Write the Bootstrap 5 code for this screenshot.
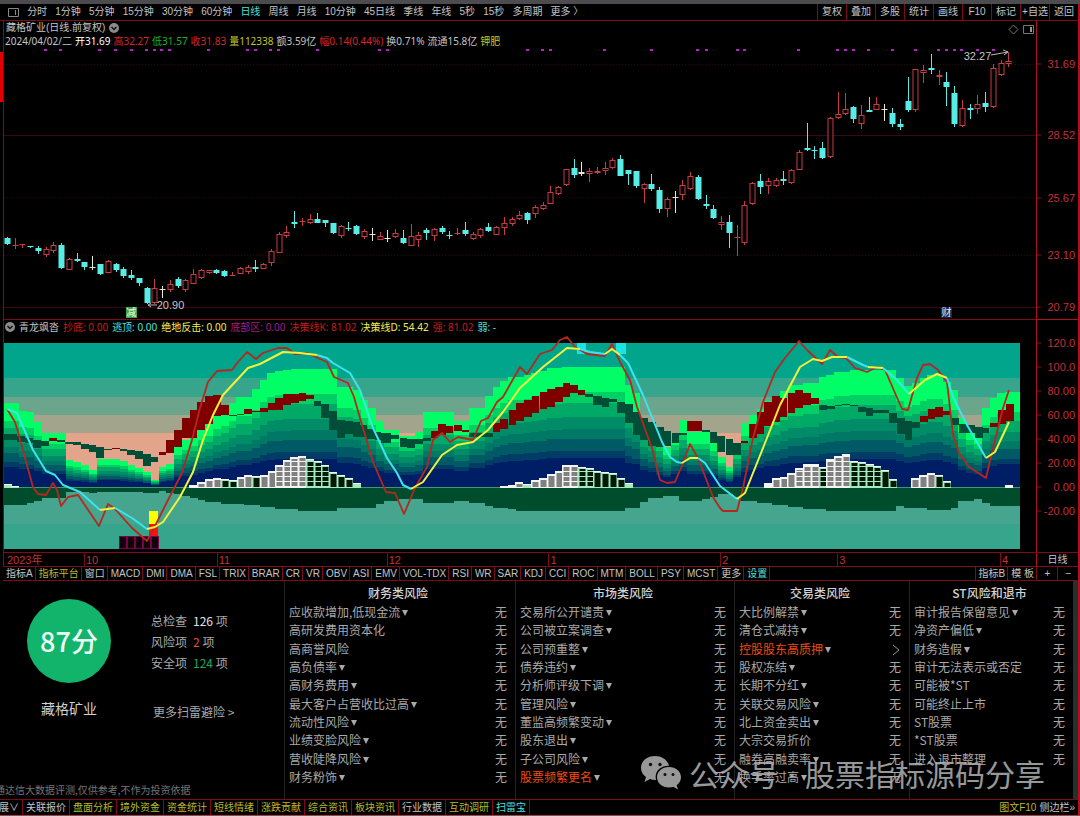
<!DOCTYPE html>
<html lang="zh-CN">
<head>
<meta charset="utf-8">
<meta name="viewport" content="width=device-width, initial-scale=1">
<title>藏格矿业 日线</title>
<link href="https://cdn.jsdelivr.net/npm/bootstrap@5.3.0/dist/css/bootstrap.min.css" rel="stylesheet">
<style>
:root{--line:#7d0c18;--ink:#c4c4c4;--cyan:#4fe0dc;--olive:#b9b92e}
body{background:#000;color:var(--ink);font:10px/12px "Liberation Sans","Noto Sans CJK SC",sans-serif;overflow-x:hidden}
button{background:none;border:0;padding:0;color:inherit;font:inherit;white-space:nowrap}
a{color:inherit;text-decoration:none}
.topstrip{height:4px;background:#4c4c4f}
.frame{border-right:2px solid #b00f1c}
.toolbar{height:17px;border-bottom:1px solid var(--line);padding-left:3px}
.periods{width:54%;padding-left:5px}
.tools button{width:29px;height:16px;border-left:1px solid var(--line)}
.is-on{color:var(--cyan)}
.is-olive{color:var(--olive)}
.gutter{width:4px;border-right:1px solid var(--line)}
.gutter-mark{width:3px;height:50px;margin-top:31px;background:#e00000}
.quote-line,.ind-line{font-family:"Noto Sans","Noto Sans CJK SC",sans-serif;white-space:nowrap}
.title-line{height:13px;padding:1px 0 0 2px}
.quote-line{height:13px;padding-left:1px;gap:3px}
.ind-line{height:15px;padding-left:1px;gap:4px;border-top:1px solid var(--line)}
.plot{min-width:0}
.plot svg.pane{display:block;width:100%}
.price{height:272px}
.fan{height:218px}
.axis{width:42px;border-left:1px solid #b00f1c}
.axis svg{display:block}
.axis-low{border-top:1px solid #b00f1c}
.axis text{font:11px "Liberation Sans",sans-serif;fill:#c2303a;text-anchor:end}
.note{position:absolute;font-size:11px;line-height:12px}
.flag{position:absolute;width:11px;height:11px;line-height:11px;text-align:center}
.pane-icons{position:absolute;right:2px;top:3px}
.months{border-top:1px solid var(--line);height:14px;margin-left:3px}
.months-grid{display:grid;grid-template-columns:80fr 133fr 170fr 162fr 172fr 117fr 163fr 36fr;color:#c2303a;border-left:1px solid var(--line)}
.months-grid span{border-left:1px solid var(--line);padding-left:1px;font-size:11px;line-height:14px}
.months-grid span:first-child{border:0;padding-left:3px}
.unit{width:42px;border-left:1px solid #b00f1c;line-height:14px}
.tabsrow{height:15px;border-top:1px solid var(--line);border-bottom:1px solid var(--line);margin-left:3px}
.tabsrow button{padding:0 2px 0 3px;border-right:1px solid var(--line)}
.tabsrow .endtabs button{border-right:0;border-left:1px solid var(--line)}
.endtabs .sq{width:21px}
.risk{display:grid;grid-template-columns:284fr 231fr 219fr 175fr 164fr 5px;height:218px;font:12px/18px "Noto Sans CJK SC",sans-serif;color:#a9a9a9}
.riskcol{border-left:1px solid #232323;padding:2px 8px 13px 4px}
.riskcol h2{font-size:12px;line-height:20px;color:#d2d2d2;margin:0;text-align:center}
.riskcol ul{display:grid;grid-template-rows:repeat(10,1fr)}
.riskcol .dropdown-toggle::after{margin-left:2px;vertical-align:1px;border-top:6px solid #a9a9a9;border-left:3px solid transparent;border-right:3px solid transparent}
.is-hot{color:#ee4a12}
.thumb{background:#26302f}
.summary{padding:18px 0 0 27px}
.score{width:84px;height:84px;border-radius:50%;background:#12b36b;color:#e9fff3;font-size:27px;font-weight:500}
.stock{font-size:14px;color:#d0d0d0}
.stats{padding-top:11px;margin-left:40px;line-height:21px}
.num-all{color:#e2e2e2}.num-bad{color:#f04a38}.num-ok{color:#1ba85f}
.more{margin-top:28px;padding-left:2px}
.disclaimer{position:absolute;left:-5px;bottom:2px;font-size:10px;line-height:14px;color:#757575;white-space:nowrap}
.watermark{position:absolute;right:33px;bottom:4px;gap:8px;font:30px/44px "Noto Sans CJK SC",sans-serif;color:#b2b2b2;opacity:.86;pointer-events:none;white-space:nowrap}
.watermark .sep{font-family:"Liberation Sans",sans-serif}
.bottomtabs{height:16px;border-top:1px solid var(--line);overflow:hidden}
.bottomtabs button{padding:0 3px;border-right:1px solid var(--line)}
.bottomtabs .cut{margin-left:-14px}
.closing{height:2px;background:#e5d3d5;border-top:1px solid #a93a46}
</style>
</head>
<body>
<div class="topstrip"></div>
<div class="frame">
  <nav class="toolbar d-flex justify-content-between">
    <div class="periods d-flex justify-content-between align-items-center">
      <button aria-label="侧栏"><svg width="11" height="9" viewBox="0 0 11 9" fill="none" stroke="#8a8a8a"><path d="M.5.5h10v8H.5zM7.500 2v5"/></svg></button>
      <button>分时</button><button>1分钟</button><button>5分钟</button><button>15分钟</button><button>30分钟</button><button>60分钟</button><button class="is-on">日线</button><button>周线</button><button>月线</button><button>10分钟</button><button>45日线</button><button>季线</button><button>年线</button><button>5秒</button><button>15秒</button><button>多周期</button><button>更多 〉</button>
    </div>
    <div class="tools d-flex">
      <button>复权</button><button>叠加</button><button>多股</button><button>统计</button><button>画线</button><button>F10</button><button>标记</button><button>+自选</button><button>返回</button>
    </div>
  </nav>

  <main>
    <div class="d-flex">
      <div class="gutter flex-shrink-0"><div class="gutter-mark"></div></div>
      <div class="plot flex-grow-1">
        <section class="position-relative">
          <div class="title-line d-flex align-items-center gap-1"><span>藏格矿业(日线.前复权)</span>
            <svg width="10" height="10" viewBox="0 0 10 10"><circle cx="5" cy="5" r="5" fill="#8b8b8b"/><path d="M2.500 4 5 6.500 7.500 4" fill="none" stroke="#111" stroke-width="1.500"/></svg></div>
          <div class="quote-line d-flex align-items-center"><span>2024/04/02/二</span><span class="text-white">开31.69</span><span style="color:#d8242c">高32.27</span><span style="color:#18b428">低31.57</span><span style="color:#d8242c">收31.83</span><span style="color:#c4c42c">量112338</span><span>额3.59亿</span><span style="color:#d8242c">幅0.14(0.44%)</span><span>换0.71%</span><span>流通15.8亿</span><span style="color:#c4c42c">钾肥</span></div>
          <svg id="price" class="pane price" viewBox="4 47 1032 272" preserveAspectRatio="none"></svg>
          <div class="pane-icons d-flex gap-1">
            <svg width="11" height="11" viewBox="0 0 11 11" fill="none" stroke="#777"><path d="M5.500 1 10 5.500 5.500 10 1 5.500z"/></svg>
            <svg width="11" height="11" viewBox="0 0 11 11" fill="none" stroke="#777"><path d="M.5 1.500h10v8H.5z"/><path d="M7 3h2v5H7z" fill="#999" stroke="none"/></svg>
          </div>
          <span class="note" style="left:93%;top:29px">32.27</span>
          <span class="note" style="left:14.8%;top:278px">20.90</span>
          <span class="flag" style="left:11.8%;top:286px;background:#3fa33a;color:#eaffea">减</span>
          <span class="flag" style="left:90.800%;top:286px;background:#17284e;color:#dfe8ff">财</span>
        </section>
        <section>
          <div class="ind-line d-flex align-items-center">
            <svg width="10" height="10" viewBox="0 0 10 10"><circle cx="5" cy="5" r="5" fill="#8b8b8b"/><path d="M2.500 4 5 6.500 7.500 4" fill="none" stroke="#111" stroke-width="1.500"/></svg>
            <span>青龙飒沓</span><span style="color:#c81c1c">抄底: 0.00</span><span style="color:#4fe0dc">逃顶: 0.00</span><span style="color:#f0f05a">绝地反击: 0.00</span><span style="color:#a81c80">底部区: 0.00</span><span style="color:#c81c1c">决策线K: 81.02</span><span style="color:#f0f05a">决策线D: 54.42</span><span style="color:#c81c1c">强: 81.02</span><span style="color:#4fe0dc">弱: -</span>
          </div>
          <svg id="fan" class="pane fan" viewBox="4 334 1032 218" preserveAspectRatio="none"></svg>
        </section>
      </div>
      <div class="axis flex-shrink-0">
        <svg id="axisHigh" width="41" height="298" viewBox="1037 21 41 298"></svg>
        <svg id="axisLow" class="axis-low" width="41" height="233" viewBox="1037 320 41 232"></svg>
      </div>
    </div>

    <div class="months d-flex">
      <div class="months-grid flex-grow-1"><span>2023年</span><span>10</span><span>11</span><span>12</span><span>1</span><span>2</span><span>3</span><span>4</span></div>
      <div class="unit text-center">日线</div>
    </div>

    <nav class="tabsrow d-flex justify-content-between">
      <div class="d-flex">
        <button>指标A</button><button class="is-olive">指标平台</button><button>窗口</button><button>MACD</button><button>DMI</button><button>DMA</button><button>FSL</button><button>TRIX</button><button>BRAR</button><button>CR</button><button>VR</button><button>OBV</button><button>ASI</button><button>EMV</button><button>VOL-TDX</button><button>RSI</button><button>WR</button><button>SAR</button><button>KDJ</button><button>CCI</button><button>ROC</button><button>MTM</button><button>BOLL</button><button>PSY</button><button>MCST</button><button>更多</button><button class="is-on">设置</button>
      </div>
      <div class="endtabs d-flex"><button>指标B</button><button>模 板</button><button class="sq">+</button><button class="sq">−</button></div>
    </nav>

    <section class="risk position-relative overflow-hidden">
      <div class="summary d-flex align-items-start position-relative">
        <div class="text-center">
          <div class="score d-flex align-items-center justify-content-center">87分</div>
          <div class="stock mt-3">藏格矿业</div>
        </div>
        <div class="stats">
          <div>总检查&ensp;<span class="num-all">126</span> 项</div>
          <div>风险项&ensp;<span class="num-bad">2</span> 项</div>
          <div>安全项&ensp;<span class="num-ok">124</span> 项</div>
          <a href="#" class="more d-block">更多扫雷避险 &gt;</a>
        </div>
        <div class="disclaimer">通达信大数据评测,仅供参考,不作为投资依据</div>
      </div>
      <div class="riskcol d-flex flex-column"><h2>财务类风险</h2><ul class="list-unstyled flex-fill mb-0" data-items="应收款增加,低现金流+|高研发费用资本化|高商誉风险|高负债率+|高财务费用+|最大客户占营收比过高+|流动性风险+|业绩变脸风险+|营收陡降风险+|财务粉饰+"></ul></div>
      <div class="riskcol d-flex flex-column"><h2>市场类风险</h2><ul class="list-unstyled flex-fill mb-0" data-items="交易所公开谴责+|公司被立案调查+|公司预重整+|债券违约+|分析师评级下调+|管理风险+|董监高频繁变动+|股东退出+|子公司风险+|!股票频繁更名+"></ul></div>
      <div class="riskcol d-flex flex-column"><h2>交易类风险</h2><ul class="list-unstyled flex-fill mb-0" data-items="大比例解禁+|清仓式减持+|!控股股东高质押+|股权冻结+|长期不分红+|关联交易风险+|北上资金卖出+|大宗交易折价|融券高融卖率+|换手率过高+"></ul></div>
      <div class="riskcol d-flex flex-column"><h2>ST风险和退市</h2><ul class="list-unstyled flex-fill mb-0" data-items="审计报告保留意见+|净资产偏低+|财务造假+|审计无法表示或否定|可能被*ST|可能终止上市|ST股票|*ST股票|进入退市整理"></ul></div>
      <div class="thumb"></div>
      <div class="watermark d-flex align-items-center">
        <svg width="40" height="34" viewBox="0 0 40 34"><path fill="#b2b2b2" d="M14 0C6 0 0 5 0 12c0 4 2 7 5 9l-1.500 5 5.500-3c2 .7 4 1 6 .9C13 15 20 9.500 28 9.700 26.500 4 21 0 14 0z"/><path fill="#b2b2b2" d="M28 11c-7 0-12 4.500-12 10.300S21 31.500 28 31.500c1.500 0 3-.3 4.300-.7l4.700 2.700-1.300-4.300c2.700-2 4.300-4.700 4.300-7.900C40 15.500 35 11 28 11z"/><g fill="#111"><circle cx="9.500" cy="8.500" r="1.700"/><circle cx="19" cy="8.500" r="1.700"/><circle cx="24" cy="18.500" r="1.500"/><circle cx="32" cy="18.500" r="1.500"/></g></svg>
        <span>公众号</span><span class="sep">·</span><span>股票指标源码分享</span>
      </div>
    </section>

    <nav class="bottomtabs d-flex justify-content-between">
      <div class="d-flex">
        <button class="cut">扩展∨</button><button>关联报价</button><button class="is-olive">盘面分析</button><button class="is-olive">境外资金</button><button class="is-olive">资金统计</button><button class="is-olive">短线情绪</button><button class="is-olive">涨跌贡献</button><button class="is-olive">综合资讯</button><button class="is-olive">板块资讯</button><button>行业数据</button><button class="is-olive">互动调研</button><button class="is-on">扫雷宝</button>
      </div>
      <div class="d-flex"><button class="is-olive border-0 px-0">图文F10</button><button class="border-0">侧边栏»</button></div>
    </nav>
  </main>
</div>
<div class="closing"></div>

<script src="https://cdn.jsdelivr.net/npm/bootstrap@5.3.0/dist/js/bootstrap.bundle.min.js"></script>
<script>
const rect=(x,y,w,h,f,s)=>`<rect x="${x}" y="${y}" width="${w}" height="${h}" fill="${f}"${s?` stroke="${s}"`:''}/>`;
const line=(x1,y1,x2,y2,s,e='')=>`<line x1="${x1}" y1="${y1}" x2="${x2}" y2="${y2}" stroke="${s}" ${e}/>`;

/* daily candles: kind, wick top, body top, body bottom, wick bottom */
const candles=`d237,238,244,245 u238,245,245,249 u244,244,245,248 d246,246,247,248 d246,248,251,254 u247,249,255,257 u242,245,251,253 d243,245,268,269 u258,259,270,270 d253,259,261,262
d262,262,267,270 w256,267,268,270 d264,264,274,275 u260,261,273,273 d263,264,270,272 d267,269,276,278 d270,275,278,280 d278,278,283,286 d287,288,303,304 u279,288,303,304
w286,289,290,298 u280,284,290,292 d277,279,286,288 u279,280,290,292 u269,274,284,284 u269,270,278,279 u270,270,273,274 d269,270,273,274 d270,271,276,277 u272,275,276,276
u267,268,274,274 u265,267,272,274 d260,267,269,272 u263,264,269,269 u249,251,263,266 u232,234,253,253 u226,232,236,238 d211,222,224,228 u218,221,222,226 u214,219,223,224
d213,219,223,223 d220,220,223,227 d223,223,233,234 u225,226,236,238 d222,228,229,231 d225,226,234,235 u229,231,237,239 w228,234,235,241 u232,236,240,240 w230,238,239,242
u229,233,237,238 d230,238,243,244 u224,236,246,246 u232,235,240,247 d228,230,233,240 u228,229,236,241 d226,228,232,234 d231,235,236,239 u228,233,234,235 d222,230,234,236
u232,234,239,240 u228,229,236,238 d223,227,231,232 u226,227,235,235 u217,223,228,235 u217,219,224,226 u211,215,219,220 d212,213,220,224 u205,207,214,218 u202,205,209,210
u186,192,204,204 u186,187,194,195 u169,169,185,186 d159,168,175,178 w162,172,174,176 u168,171,174,182 u167,171,173,174 u162,168,171,175 u158,160,168,169 d155,159,176,176
d170,170,174,185 d171,171,186,188 u183,184,189,203 d174,184,189,191 d187,190,209,213 u197,199,209,217 w191,197,198,213 u180,185,195,200 u172,176,189,190 d175,177,199,200
d195,204,206,209 d205,209,218,219 u216,222,225,230 d215,222,233,248 u225,237,238,256 u201,205,243,245 u182,183,204,205 d174,181,187,194 u178,181,186,194 u178,180,186,187
d171,179,181,185 u169,170,183,184 u150,152,170,170 d123,148,150,151 d146,150,151,159 d142,148,158,159 u117,118,157,158 u92,114,118,119 u93,109,114,115 d106,107,119,123
u105,115,124,129 d97,110,112,112 u97,104,110,110 w104,109,110,121 d108,113,124,127 d119,124,127,130 d77,101,110,112 u69,69,110,112 u65,70,73,83 d54,68,70,74
u70,75,77,85 d72,82,87,106 d86,93,124,127 u100,108,126,127 d104,108,110,119 u95,104,109,114 d92,103,107,112 u64,68,107,108 u60,63,75,76 u52,61,64,67`.split(/\s+/);
const step=7.765;
let p='';
[64,135,197,255,307].forEach(y=>p+=line(4,y+.5,1036,y+.5,y==135||y==307?'#3a0910':'#2e0a0e',y==135||y==307?'':'stroke-dasharray="1 2"'));
candles.forEach((c,i)=>{
  const [h,t,b,l]=c.slice(1).split(',').map(Number),x=Math.round(7.8+i*step)-.5;
  if(c[0]=='u'){
    p+=line(x,h,x,t,'#c83c42')+line(x,b,x,l,'#c83c42')+(b-t<2?line(x-3,t+.5,x+3,t+.5,'#c83c42'):rect(x-2.5,t+.5,5,b-t-1,'#000','#c83c42'));
  }else{
    const f=c[0]=='d'?'#58ece6':'#e8e8d8';
    p+=line(x,h,x,l,f)+rect(x-3,t,6,Math.max(1,b-t),f);
  }
});
[45,60,99,115,131,146,154,161,169,208,247,255,270,278,317,379,387,527,542,550,604,651,697,706,737,744,798,837,845,853,868,892,915,938,946,954,961,977,993]
  .forEach(x=>p+=rect(x-1,49,3,2,'#b028c0'));
p+='<path d="M991 55 1008 52M1003 50l5 2-4 3M157 305h-9l3-2M148 305l3 2" fill="none" stroke="#b8b8b8"/>';
document.getElementById('price').innerHTML=p;

/* stepped level lookup: pairs of start x and level */
const stairs=s=>{const a=s.trim().split(/\s+/).map(v=>v.split(',').map(Number));return x=>{let r=a[0][1];for(const [k,v] of a){if(k<=x)r=v;}return r;};};
const crest=stairs(`4,403 17,411 25,412 33,422 41,433 64,460 72,462 80,465 88,470 98,459 122,461 129,465 137,468 145,472 151,480 159,467 167,464 175,447 183,440 190,435 198,427 206,422 214,414 221,410 228,403 237,397 250,389 260,380 267,373 275,371 282,370 290,369 336,387 352,390 360,400 367,408 375,421 383,430 397,436 416,432 423,412 453,421 469,408 484,396 492,387 500,381 508,377 524,375 532,373 540,371 548,368 560,367 623,385 630,393 639,418 648,425 656,436 662,447 672,434 679,420 687,432 709,442 717,457 725,467 734,447 741,423 749,415 757,409 765,401 772,398 780,391 788,385 803,383 818,377 828,375 838,372 853,370 894,378 904,386 911,383 919,378 930,375 945,382 951,390 958,418 966,427 974,432 982,408 990,398 998,393 1006,392`);
const hem=stairs(`4,505 25,503 33,501 41,498 64,492 90,493 98,492 145,493 158,491 167,493 175,494 183,496 190,498 198,500 206,502 222,504 245,505 258,507 272,509 300,511 336,508 375,504 383,501 397,499 423,503 453,501 469,503 484,506 494,508 505,509 520,511 623,508 638,502 648,498 662,496 678,501 702,499 710,497 717,494 734,497 742,501 757,503 772,505 788,507 803,509 830,511 895,506 904,508 930,510 950,508 958,501 974,499 982,503 991,506`);
let f=rect(4,343,1016,206,'#00a58c')+rect(4,378,1016,19,'#36a58c')+rect(4,397,1016,18,'#6ba58c')+rect(4,415,1016,18,'#a2a58c')+rect(4,433,1016,54,'#e2a58c')+rect(4,487,1016,37,'#46a58e')+rect(4,524,1016,25,'#36a58c');
const tiers=[[0,'#00ff66'],[.21,'#00d064'],[.3,'#00aa66'],[.42,'#008c66'],[.52,'#007866'],[.6,'#005a66'],[.7,'#003c66'],[.76,'#001e66']];
for(let i=0;i<132;i++){
  const a=Math.max(4,Math.round(3.4+i*step)),b=Math.min(1020,Math.round(3.4+(i+1)*step));
  if(b<=a)continue;
  const m=(a+b)/2,t=crest(m);
  tiers.forEach(([k,c])=>{const y=Math.round(t+(487-t)*k);f+=rect(a,y,b-a,487-y,c);});
  f+=rect(a,487,b-a,hem(m)-487,'#004d2e');
}
/* momentum blocks: r rising, g falling */
`g4,17,434,440 g17,25,436,442 g25,33,438,443 g33,41,440,448 g41,49,441,446 r49,57,438,441 g57,65,440,442 g65,73,442,444 g73,81,442,445 g81,89,444,449 g89,96,445,452 g96,104,447,458 g104,112,449,450 r112,120,448,449 g120,127,449,451 g127,135,450,455 g135,143,451,459 g143,151,454,466 g151,158,457,462
r159,166,452,455 r166,174,440,453 r174,182,430,447 r182,190,418,438 r190,197,410,438 r197,205,402,430 r205,213,396,424 r213,221,395,416 r221,229,405,415 g229,237,415,416 g237,244,414,415 r244,252,409,414 r252,260,411,412 r260,268,408,412 r268,275,403,410 r275,283,398,410 r283,291,394,405 r291,299,394,403 r299,306,393,401 r306,314,395,399 g314,321,401,406 g321,329,404,418 g329,337,411,430 g337,345,420,438 g345,353,421,434 g353,360,422,437
g360,367,425,437 g367,375,429,439 g375,381,432,440 g381,391,433,443 g391,399,435,439 g400,407,438,447 g407,415,439,448 g415,423,439,444 g423,431,438,441 r431,438,431,438 r438,446,424,435 r446,453,426,433 r454,462,425,431 r462,469,430,432 g469,493,433,437 r493,500,423,432 r500,508,419,429 r509,516,410,425 r516,524,403,421 r524,532,400,417 r532,539,396,413 r540,547,392,409 r547,555,389,407 r555,563,387,402 r563,570,383,397 r570,578,385,393 r578,585,390,395
g585,593,394,397 g593,602,396,405 g602,609,398,407 g609,617,399,402 g617,625,402,413 g625,633,404,423 g633,640,412,435 g640,648,418,440 g648,656,422,446 g656,664,427,447 g664,671,431,446 g672,679,433,443 g679,687,433,435 r687,702,421,431 g702,710,430,432 g710,717,432,443 g717,725,436,452 g726,733,439,455 g733,741,443,455 r741,748,441,443 r749,757,424,438 r757,764,412,434 r764,772,402,426 r772,780,396,422 r780,787,398,417 r788,795,393,413 r795,803,390,408 r803,811,393,405 r811,819,398,404
g819,827,405,410 g827,835,406,409 g835,842,405,406 g842,850,404,405 g850,858,405,406 g858,866,407,412 g866,873,408,416 g873,889,410,413 g889,897,413,423 g897,905,418,434 g905,912,421,440 g912,920,422,428 r920,928,416,422 r928,935,409,419 r935,943,407,417 r943,951,411,415 g951,959,418,425 g959,967,424,433 g967,975,425,433 g975,983,427,438 g983,989,428,433 r990,998,423,427 r998,1006,410,424 r1006,1014,404,421`
.split(/\s+/).forEach(s=>{const [a,b,t,u]=s.slice(1).split(',').map(Number);f+=rect(a,t,b-a,u-t,s[0]=='r'?'#800000':'#004d38');});

/* strength columns: left edge and top */
f+=line(4,487.5,1020,487.5,'#3c9a68');
`g4,484 g11,486 u189,485 u197,482 u205,479 u213,478 g221,479 g229,480 u237,477 u244,475 g252,476 u260,475 u268,471 u275,465 u283,460 u290,457 u298,456 g306,459 g314,461 g321,465 g329,472 g337,475 g345,478 g353,483 u500,486 u508,485 u515,482 g523,484 u531,480 u539,478 u547,474 u555,471 u562,465 u570,465 g578,467 g586,468 g593,471 g601,472 g609,473 g617,478 g625,483
u764,483 u772,478 u780,477 u787,473 u795,468 u803,464 u811,464 g819,467 u826,459 u834,456 u842,454 g850,461 g858,462 g866,464 g873,466 g881,470 g889,479 u911,478 u919,475 u927,473 g935,475 g943,481 u1005,485`
.split(/\s+/).forEach(s=>{
  const [x,t]=s.slice(1).split(',').map(Number),g=s[0]=='g';
  f+=rect(x,t,8,488-t,g?'#a8e8c0':'#f4f4f4')+(g?rect(x,t,8,1,'#f4f4f4'):'');
  const tall=488-t>19;
  if(tall)for(let y=486;y>t+2;y-=5){const q=Math.max(t+2,y-4);f+=rect(x+1.5,q,6,y-q,g?'#001a08':'#808080');}
  else if(487-t>4)f+=rect(x+1.5,t+2,6,485-t,g?'#001a08':'#808080');
});
f+=rect(577,343,9,11,'#18e4e4')+rect(616,343,10,11,'#18e4e4')+rect(149,511,9,13,'#ffff00')+rect(149,524,9,12,'#ff1010');
for(let i=0;i<5;i++)f+=rect(120+i*8-.5,536.5,7,12,'#120008','#7a0050');

const poly=(pts,c,w)=>`<polyline points="${pts}" fill="none" stroke="${c}" stroke-width="${w}" stroke-linejoin="round"/>`;
f+=poly('7,409 15,422 18,432 25,458 33,487 38,494 46,495 53,483 57,490 61,506 68,497 78,495 99,526 108,504 115,509 132,528 147,541 155,526 167,502 182,473 192,440 200,408 208,382 217,371 232,370 238,362 247,352 256,359 263,353 278,348 287,348 295,354 307,353 327,362 334,377 348,383 354,397 360,418 363,428 373,462 386,492 395,493 404,514 415,488 427,467 433,440 442,433 450,442 458,437 473,440 481,421 488,418 497,402 503,397 520,367 527,374 540,354 552,350 560,340 567,337 575,347 587,354 605,356 612,344 620,362 630,380 637,407 652,448 660,480 667,483 675,482 683,463 690,444 698,458 713,497 720,508 723,511 737,511 743,488 753,438 763,402 775,372 785,358 799,341 807,350 822,364 830,350 838,357 846,358 855,368 867,372 877,367 885,370 902,409 908,410 917,378 923,365 930,364 938,370 947,382 953,435 959,453 969,467 986,478 993,448 1003,408 1009,390','#b8261f',1.8);
/* signal line alternates between falling (c) and rising (y) */
let last='';
`c7,409 17,413 33,450 46,471 55,475 63,485 80,492 100,510|y115,508|c132,518 147,529|y155,527 163,522 180,497 193,472 203,440 213,415 223,395 248,368 260,364 283,352 300,353 317,355|c327,358 333,363 350,373 360,390 373,428 387,458 397,473 403,485 411,489|y423,482 442,455 457,445 473,442 488,430 503,412 520,388 543,367 567,348 580,349|c590,352 605,354|y612,349 620,355|c628,363 643,395 662,442 670,457 677,462 682,463|y690,458 698,458|c705,463 720,486 737,499|y745,493 763,448 780,405 800,367 813,359 822,361 832,357 847,357|c863,365 868,367|y883,368|c897,380 909,394|y925,380 937,374 947,378|c953,397 967,425 986,458|y995,452 1009,422`
.split('|').forEach(s=>{const q=s.slice(1);f+=poly(last+' '+q,s[0]=='c'?'#3ce4ee':'#f2f23c',2);last=q.split(' ').pop();});
document.getElementById('fan').innerHTML=f;

const ticks=(id,a)=>document.getElementById(id).innerHTML=a.map(([t,y])=>line(1037,y,1041,y,'#8a1420')+`<text x="1075" y="${y+4}">${t}</text>`).join('');
ticks('axisHigh',[['31.69',64],['28.52',135],['25.67',198],['23.10',255],['20.79',307]]);
ticks('axisLow',[['120.0',343],['100.0',367],['80.00',391],['60.00',415],['40.00',439],['20.00',463],['0.00',487],['-20.00',511]]);

document.querySelectorAll('[data-items]').forEach(ul=>{
  ul.innerHTML=ul.dataset.items.split('|').map(s=>{
    const hot=s[0]=='!',more=s.endsWith('+'),name=s.replace(/^!|\+$/g,'');
    const label=more?`<button class="dropdown-toggle${hot?' is-hot':''}">${name}</button>`:`<span>${name}</span>`;
    return `<li class="d-flex justify-content-between align-items-center">${label}<span>${name=='控股股东高质押'?'<svg width="9" height="12" viewBox="0 0 9 12" fill="none" stroke="#999"><path d="M1 1l6 5-6 5"/></svg>':'无'}</span></li>`;
  }).join('');
});
</script>
</body>
</html>
